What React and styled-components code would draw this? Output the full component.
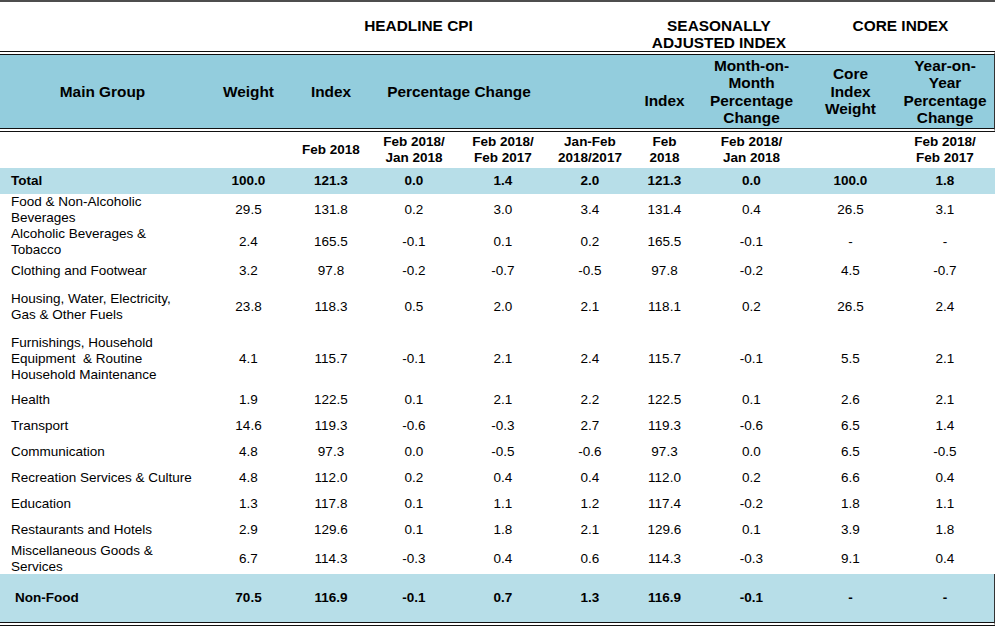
import React from 'react'
import styled, { createGlobalStyle } from 'styled-components'

const GlobalStyle = createGlobalStyle`
    body {
        margin: 0;
        background: #fff;
        font-family: "Liberation Sans", Arial, sans-serif;
        color: #000;
    }
`

const COLS = '205px 87px 78px 88px 90px 84px 65px 109px 89px 100px'

const Sheet = styled.div`
    width: 995px;
    border-top: 2px solid #4d4d4d;
`

const GroupRow = styled.div`
    display: grid;
    grid-template-columns: ${COLS};
    height: 49px;
    box-sizing: border-box;
    padding-top: 15px;
    align-items: start;
`

const GroupTitle = styled.div`
    grid-column: ${props => props.$start} / span ${props => props.$span};
    text-align: center;
    font-weight: 700;
    font-size: 15.4px;
    line-height: 17px;
`

const HeaderBand = styled.div`
    display: grid;
    grid-template-columns: ${COLS};
    height: 81px;
    box-sizing: border-box;
    border-top: 4px double #111;
    border-bottom: 4px double #111;
    border-right: 1px solid #333;
    background: #93cddd;
    background-clip: padding-box;
    align-items: center;
`

const HeadCell = styled.div`
    grid-column: ${props => props.$span ? `span ${props.$span}` : 'auto'};
    text-align: center;
    font-weight: 700;
    font-size: 15.4px;
    line-height: 17.5px;
    padding-top: ${props => props.$drop || 0}px;
`

const SubRow = styled.div`
    display: grid;
    grid-template-columns: ${COLS};
    height: 36px;
    align-items: center;
    font-weight: 700;
    font-size: 13.5px;
    line-height: 16px;
    text-align: center;
`

const DataRow = styled.div`
    display: grid;
    grid-template-columns: ${COLS};
    height: ${props => props.$h}px;
    box-sizing: border-box;
    align-items: center;
    font-size: 13.5px;
    line-height: 16px;
    font-weight: ${props => props.$bold ? 700 : 400};
    background: ${props => props.$band ? '#b7dee8' : 'transparent'};
    background-clip: padding-box;
    border-bottom: ${props => props.$last ? '4px double #111' : 'none'};
    border-right: ${props => props.$last ? '1px solid #333' : 'none'};
`

const NameCell = styled.div`
    padding-left: ${props => props.$indent || 11}px;
    white-space: nowrap;
`

const NumCell = styled.div`
    text-align: center;
`

const rows = [
    { name: ['Total'], h: 26, bold: true, band: true, v: ['100.0', '121.3', '0.0', '1.4', '2.0', '121.3', '0.0', '100.0', '1.8'] },
    { name: ['Food & Non-Alcoholic', 'Beverages'], h: 32, v: ['29.5', '131.8', '0.2', '3.0', '3.4', '131.4', '0.4', '26.5', '3.1'] },
    { name: ['Alcoholic Beverages &', 'Tobacco'], h: 32, v: ['2.4', '165.5', '-0.1', '0.1', '0.2', '165.5', '-0.1', '-', '-'] },
    { name: ['Clothing and Footwear'], h: 26, v: ['3.2', '97.8', '-0.2', '-0.7', '-0.5', '97.8', '-0.2', '4.5', '-0.7'] },
    { name: ['Housing, Water, Electricity,', 'Gas & Other Fuels'], h: 46, v: ['23.8', '118.3', '0.5', '2.0', '2.1', '118.1', '0.2', '26.5', '2.4'] },
    { name: ['Furnishings, Household', 'Equipment\u00a0 & Routine', 'Household Maintenance'], h: 57, v: ['4.1', '115.7', '-0.1', '2.1', '2.4', '115.7', '-0.1', '5.5', '2.1'] },
    { name: ['Health'], h: 26, v: ['1.9', '122.5', '0.1', '2.1', '2.2', '122.5', '0.1', '2.6', '2.1'] },
    { name: ['Transport'], h: 26, v: ['14.6', '119.3', '-0.6', '-0.3', '2.7', '119.3', '-0.6', '6.5', '1.4'] },
    { name: ['Communication'], h: 26, v: ['4.8', '97.3', '0.0', '-0.5', '-0.6', '97.3', '0.0', '6.5', '-0.5'] },
    { name: ['Recreation Services & Culture'], h: 26, v: ['4.8', '112.0', '0.2', '0.4', '0.4', '112.0', '0.2', '6.6', '0.4'] },
    { name: ['Education'], h: 26, v: ['1.3', '117.8', '0.1', '1.1', '1.2', '117.4', '-0.2', '1.8', '1.1'] },
    { name: ['Restaurants and Hotels'], h: 26, v: ['2.9', '129.6', '0.1', '1.8', '2.1', '129.6', '0.1', '3.9', '1.8'] },
    { name: ['Miscellaneous Goods &', 'Services'], h: 31, v: ['6.7', '114.3', '-0.3', '0.4', '0.6', '114.3', '-0.3', '9.1', '0.4'] },
    { name: ['Non-Food'], h: 52, bold: true, band: true, last: true, indent: 15, v: ['70.5', '116.9', '-0.1', '0.7', '1.3', '116.9', '-0.1', '-', '-'] },
]

const lines = parts => parts.map((p, i) => (
    <React.Fragment key={i}>{i > 0 && <br />}{p}</React.Fragment>
))

export default function App() {
    return (
        <>
            <GlobalStyle />
            <Sheet>
                <GroupRow>
                    <GroupTitle $start={2} $span={5}>HEADLINE CPI</GroupTitle>
                    <GroupTitle $start={7} $span={2}>SEASONALLY<br />ADJUSTED INDEX</GroupTitle>
                    <GroupTitle $start={9} $span={2}>CORE INDEX</GroupTitle>
                </GroupRow>

                <HeaderBand>
                    <HeadCell>Main Group</HeadCell>
                    <HeadCell>Weight</HeadCell>
                    <HeadCell>Index</HeadCell>
                    <HeadCell $span={2}>Percentage Change</HeadCell>
                    <HeadCell />
                    <HeadCell $drop={18}>Index</HeadCell>
                    <HeadCell>Month-on-<br />Month<br />Percentage<br />Change</HeadCell>
                    <HeadCell>Core<br />Index<br />Weight</HeadCell>
                    <HeadCell>Year-on-<br />Year<br />Percentage<br />Change</HeadCell>
                </HeaderBand>

                <SubRow>
                    <div />
                    <div />
                    <div>Feb 2018</div>
                    <div>Feb 2018/<br />Jan 2018</div>
                    <div>Feb 2018/<br />Feb 2017</div>
                    <div>Jan-Feb<br />2018/2017</div>
                    <div>Feb<br />2018</div>
                    <div>Feb 2018/<br />Jan 2018</div>
                    <div />
                    <div>Feb 2018/<br />Feb 2017</div>
                </SubRow>

                {rows.map(r => (
                    <DataRow key={r.name[0]} $h={r.h} $bold={r.bold} $band={r.band} $last={r.last}>
                        <NameCell $indent={r.indent}>{lines(r.name)}</NameCell>
                        {r.v.map((x, i) => <NumCell key={i}>{x}</NumCell>)}
                    </DataRow>
                ))}
            </Sheet>
        </>
    )
}
